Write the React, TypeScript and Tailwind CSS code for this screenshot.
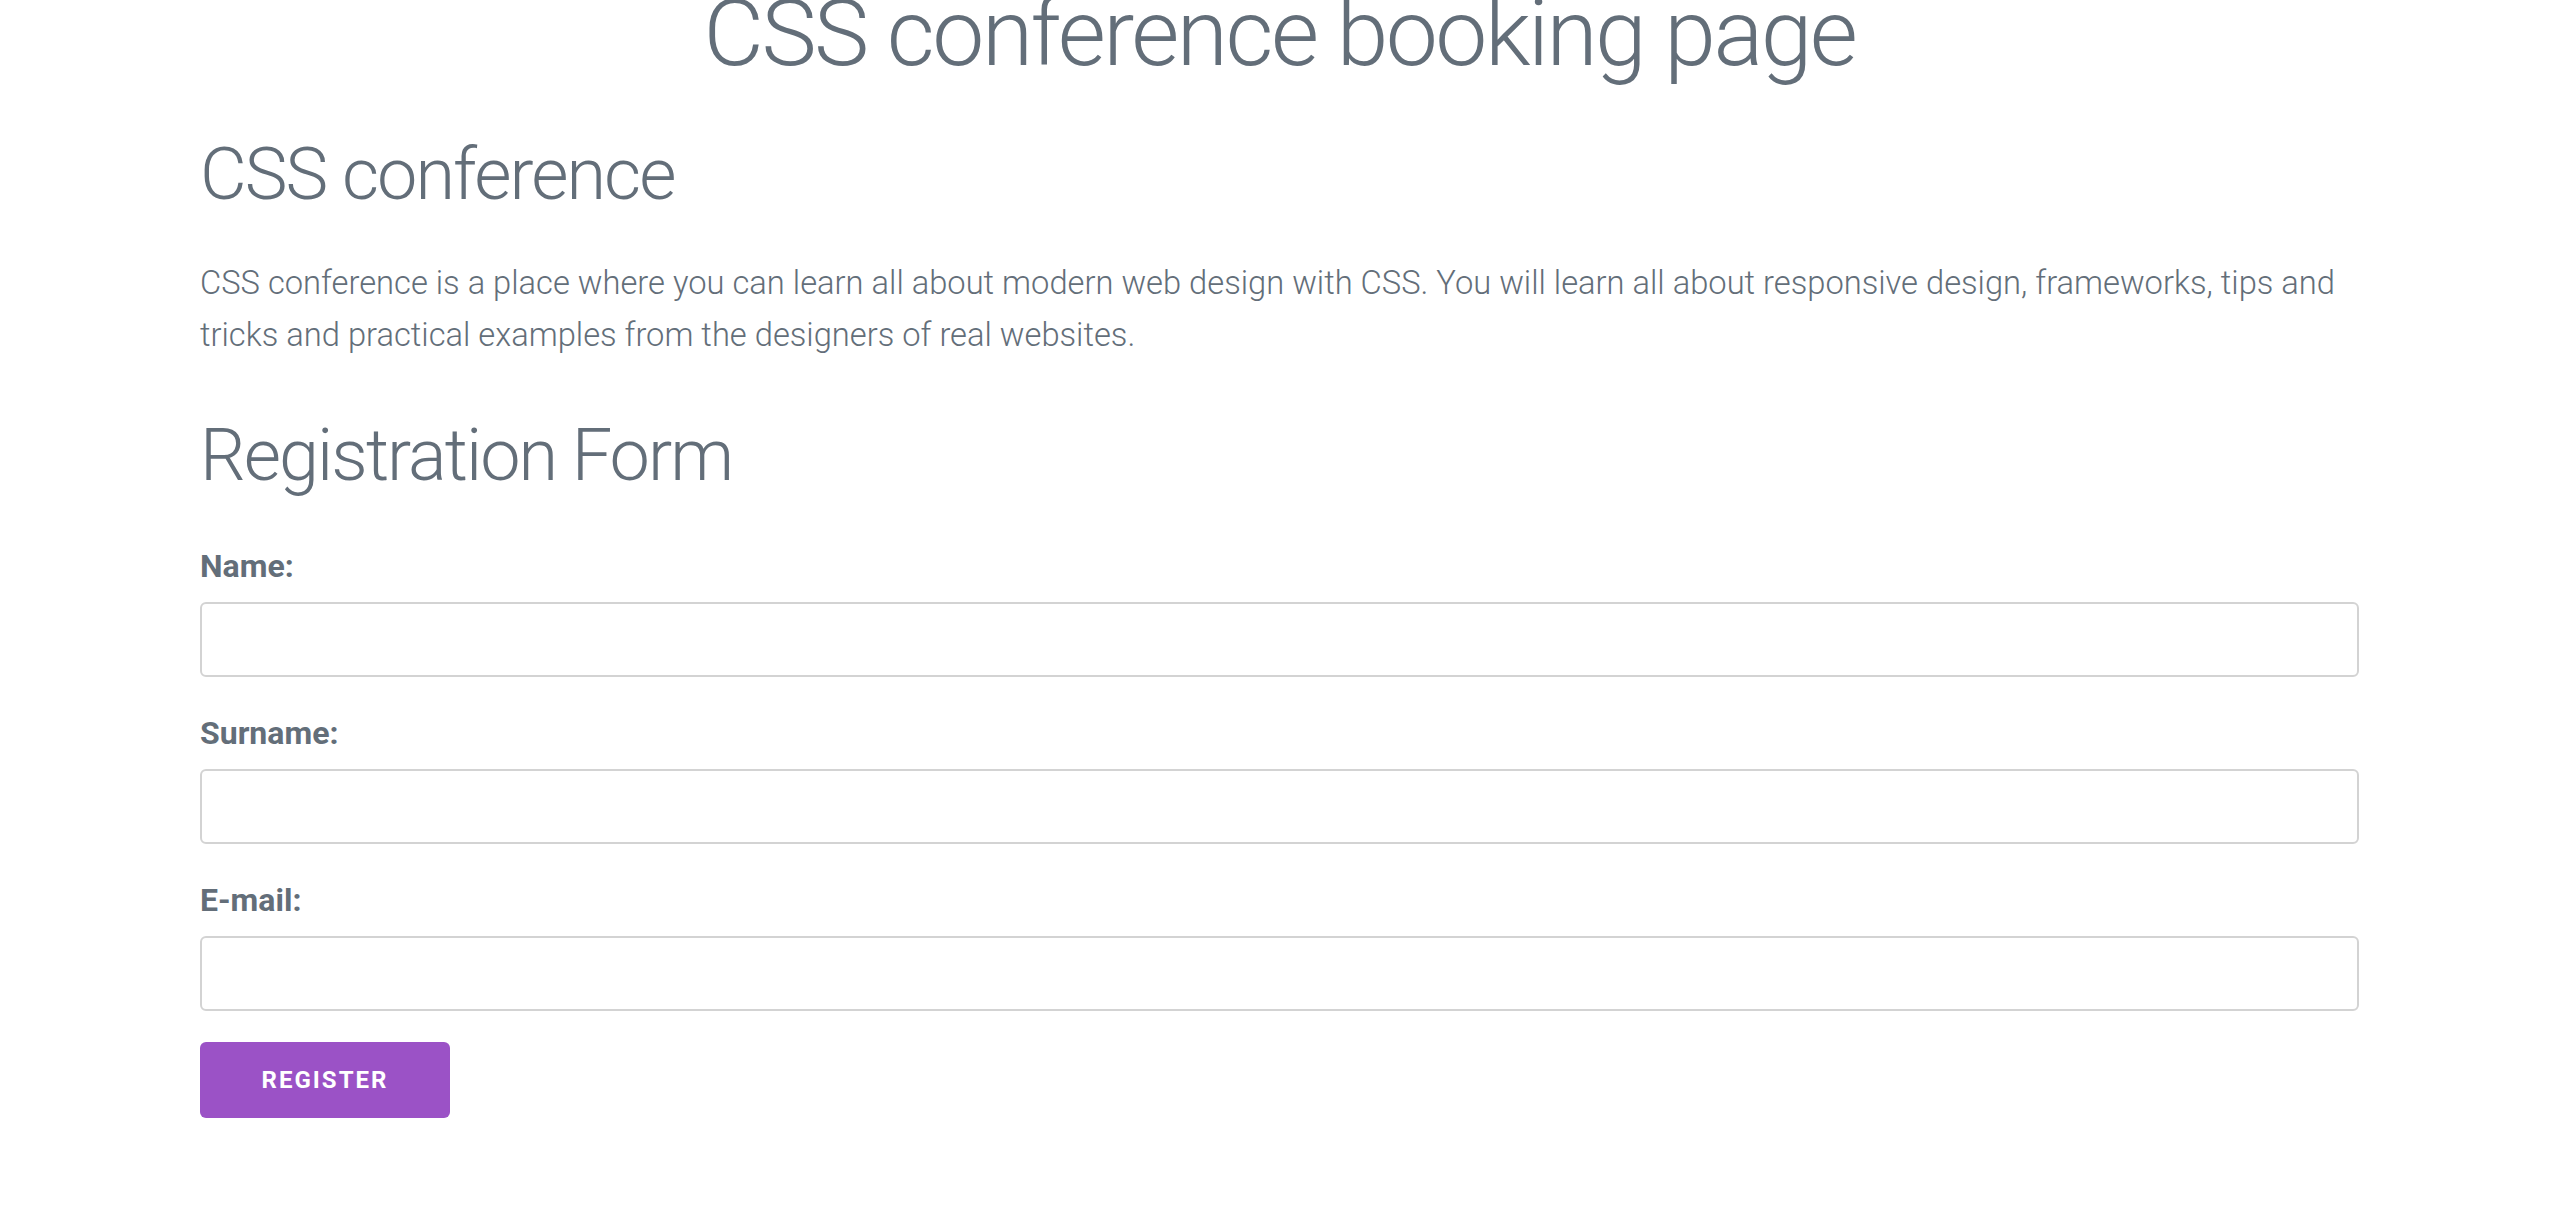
import React from "react";

export default function App() {
  const font = { fontFamily: "Roboto, 'Liberation Sans', sans-serif" };
  return (
    <div className="min-h-screen bg-white text-[#636e79]" style={font}>
      <div className="ml-[200px] w-[2159px]">
        <h1 className="-mt-[21px] text-center text-[93px] font-light leading-[110px] tracking-[-0.027em]">
          CSS conference booking page
        </h1>
        <h2 className="mt-[44px] text-[72px] font-light leading-[84px] tracking-[-0.027em]">
          CSS conference
        </h2>
        <p className="mt-[40px] text-[32.7px] font-light leading-[52px]">
          CSS conference is a place where you can learn all about modern web design with CSS. You will learn all about
          responsive design, frameworks, tips and tricks and practical examples from the designers of real websites.
        </p>
        <h2 className="mt-[53px] text-[72px] font-light leading-[84px] tracking-[-0.027em]">Registration Form</h2>
        <form className="mt-[52px] flex flex-col" onSubmit={(e) => e.preventDefault()}>
          {["Name:", "Surname:", "E-mail:"].map((l, i) => (
            <div key={l} className={i === 0 ? "" : "mt-[40px]"}>
              <label className="block text-[32px] font-bold leading-[32px]">{l}</label>
              <input
                type="text"
                className="mt-[20px] block h-[75px] w-full rounded-[6px] border-2 border-[#d3d3d3] bg-white outline-none"
              />
            </div>
          ))}
          <button
            type="submit"
            className="mt-[31px] h-[76px] w-[250px] rounded-[6px] bg-[#9b52c6] text-[24px] font-bold tracking-[2px] text-white"
          >
            REGISTER
          </button>
        </form>
      </div>
    </div>
  );
}
